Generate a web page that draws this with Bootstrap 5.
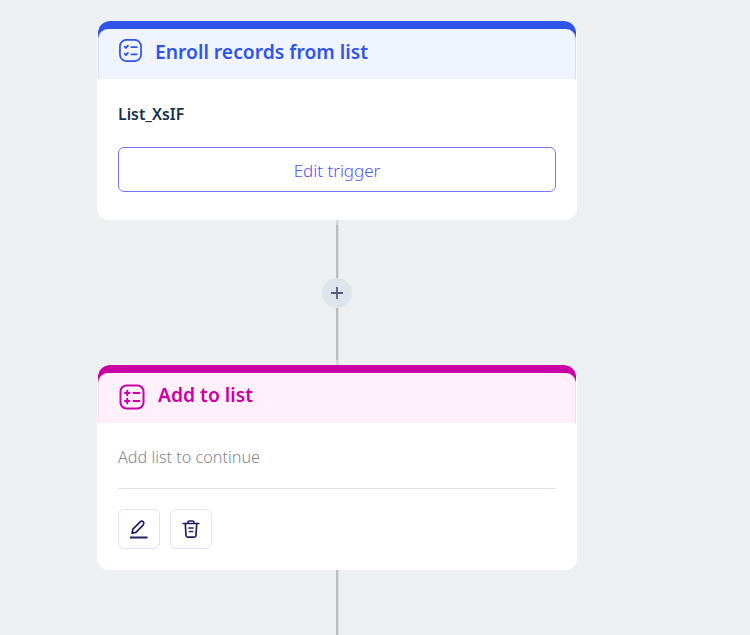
<!DOCTYPE html>
<html lang="en">
<head>
    <title>Workflow</title>
    <meta charset="utf-8">
    <link href="https://cdn.jsdelivr.net/npm/bootstrap@5.3.3/dist/css/bootstrap.min.css" rel="stylesheet">
    <style>
        html, body { height: 635px; overflow: hidden; }
        body { background: #ecf0f3; font-family: "Noto Sans", sans-serif; }
        .flow-col { width: 480px; margin-left: 97px; padding-top: 21px; }
        .step-box { background: #fff; border-radius: 12px; overflow: hidden; }
        .step-top { border-radius: 12px 12px 0 0; padding-top: 8px; margin: 0 1px; }
        .step-head { border-radius: 10px 10px 0 0; border-left: 1px solid #d9dcf0; border-right: 1px solid #d9dcf0; height: 50px; padding-left: 20px; gap: 13px; }
        .step-blue { background: #2f54eb; }
        .step-blue .step-head { background: #f0f4ff; color: #2f54eb; padding-bottom: 8px; }
        .step-blue .step-title { margin-top: 4px; }
        .step-pink { background: #c900a5; }
        .step-pink .step-head { background: #fff0fb; color: #c900a5; border-color: #f0dcea; padding-bottom: 2px; }
        .step-pink .step-title { margin-bottom: 4px; }
        .step-title { font-size: 19.3px; font-weight: 600; }
        .step-body { padding: 24px 21px 28px; }
        .step-body-alt { padding: 23px 21px 21px; }
        .list-name { font-size: 15.8px; font-weight: 600; color: #1c2f4a; line-height: 22px; }
        .btn-edit { height: 45px; margin-top: 22px; padding-top: 3px; border: 1px solid #7577fb; border-radius: 6px; color: #4f52ff; font-size: 17px; font-weight: 300; background: #fff; }
        .hint-text { font-size: 16.2px; font-weight: 300; color: #84888f; line-height: 22px; }
        .step-rule { border-top: 1px solid #dfe3ee; margin: 20px 0; }
        .btn-row { gap: 10px; }
        .btn-square { width: 42px; height: 40px; padding: 0; border: 1px solid #dfe5f2; border-radius: 6px; background: #fff; }
        .link-line { width: 2px; background: #b9bbbd; margin: 0 auto; box-shadow: 1px 0 0 #dcdee0; }
        .link-top { height: 58px; border-top: 5px solid #d5d7d9; }
        .link-bottom { height: 57px; border-bottom: 5px solid #d5d7d9; }
        .link-end { height: 70px; }
        .add-dot { width: 30px; height: 30px; border-radius: 50%; background: #dde4ec; color: #54587c; margin: 0 auto; }
    </style>
</head>
<body>

<div class="flow-col">
    <div class="step-box">
        <div class="step-top step-blue">
            <div class="step-head d-flex align-items-center">
                <svg width="23" height="23" viewBox="0 0 24 24" fill="none" stroke="currentColor" stroke-width="1.8" stroke-linecap="round" stroke-linejoin="round">
                    <rect x="1" y="1" width="22" height="22" rx="6.5"/>
                    <path d="M6 8l1.300 1.300 2-2.300M13 8.500h5.500M6 15.500l1.300 1.300 2-2.300M13 16h5.500" stroke-width="2"/>
                </svg>
                <span class="step-title">Enroll records from list</span>
            </div>
        </div>
        <div class="step-body">
            <div class="list-name">List_XsIF</div>
            <button type="button" class="btn-edit w-100 d-block">Edit trigger</button>
        </div>
    </div>

    <div class="link-line link-top"></div>
    <div class="add-dot d-flex align-items-center justify-content-center">
        <svg width="14" height="14" viewBox="0 0 14 14" stroke="currentColor" stroke-width="1.8"><path d="M7 1v12M1 7h12"/></svg>
    </div>
    <div class="link-line link-bottom"></div>

    <div class="step-box">
        <div class="step-top step-pink">
            <div class="step-head d-flex align-items-center">
                <svg width="26" height="26" viewBox="0 0 26 26" fill="none" stroke="currentColor" stroke-width="2" stroke-linecap="round" stroke-linejoin="round">
                    <rect x="1.500" y="1.500" width="23" height="23" rx="6"/>
                    <path d="M6 9h4.500M8.250 6.800v4.400M6 17h4.500M8.250 14.800v4.400M14.500 9h6M14.500 17h6"/>
                </svg>
                <span class="step-title">Add to list</span>
            </div>
        </div>
        <div class="step-body-alt">
            <div class="hint-text">Add list to continue</div>
            <div class="step-rule"></div>
            <div class="d-flex btn-row">
                <button type="button" class="btn-square d-flex align-items-center justify-content-center">
                    <svg width="20" height="20" viewBox="0 0 20 20" fill="none" stroke="#231f63" stroke-width="1.700" stroke-linejoin="round">
                        <path d="M3 14.200l.9-4L11.200 2.800c.9-.9 2.300-.9 3.100 0s.8 2.100 0 3L7 13.300z"/>
                        <path d="M1 18.500h17.500" stroke-width="2"/>
                    </svg>
                </button>
                <button type="button" class="btn-square d-flex align-items-center justify-content-center">
                    <svg width="18" height="20" viewBox="0 0 18 20" fill="none" stroke="#231f63" stroke-width="1.700" stroke-linecap="round" stroke-linejoin="round">
                        <path d="M1.200 4.500h15.600M6 4.500V3.200c0-.8.500-1.200 1.200-1.200h3.600c.7 0 1.200.4 1.200 1.200v1.300"/>
                        <path d="M3.300 4.500l.7 12c.1 1 .7 1.700 1.700 1.700h6.600c1 0 1.600-.7 1.700-1.700l.7-12M7 9h4M7.500 12.500h3"/>
                    </svg>
                </button>
            </div>
        </div>
    </div>

    <div class="link-line link-end"></div>
</div>

<script src="https://cdn.jsdelivr.net/npm/bootstrap@5.3.3/dist/js/bootstrap.bundle.min.js"></script>
</body>
</html>
